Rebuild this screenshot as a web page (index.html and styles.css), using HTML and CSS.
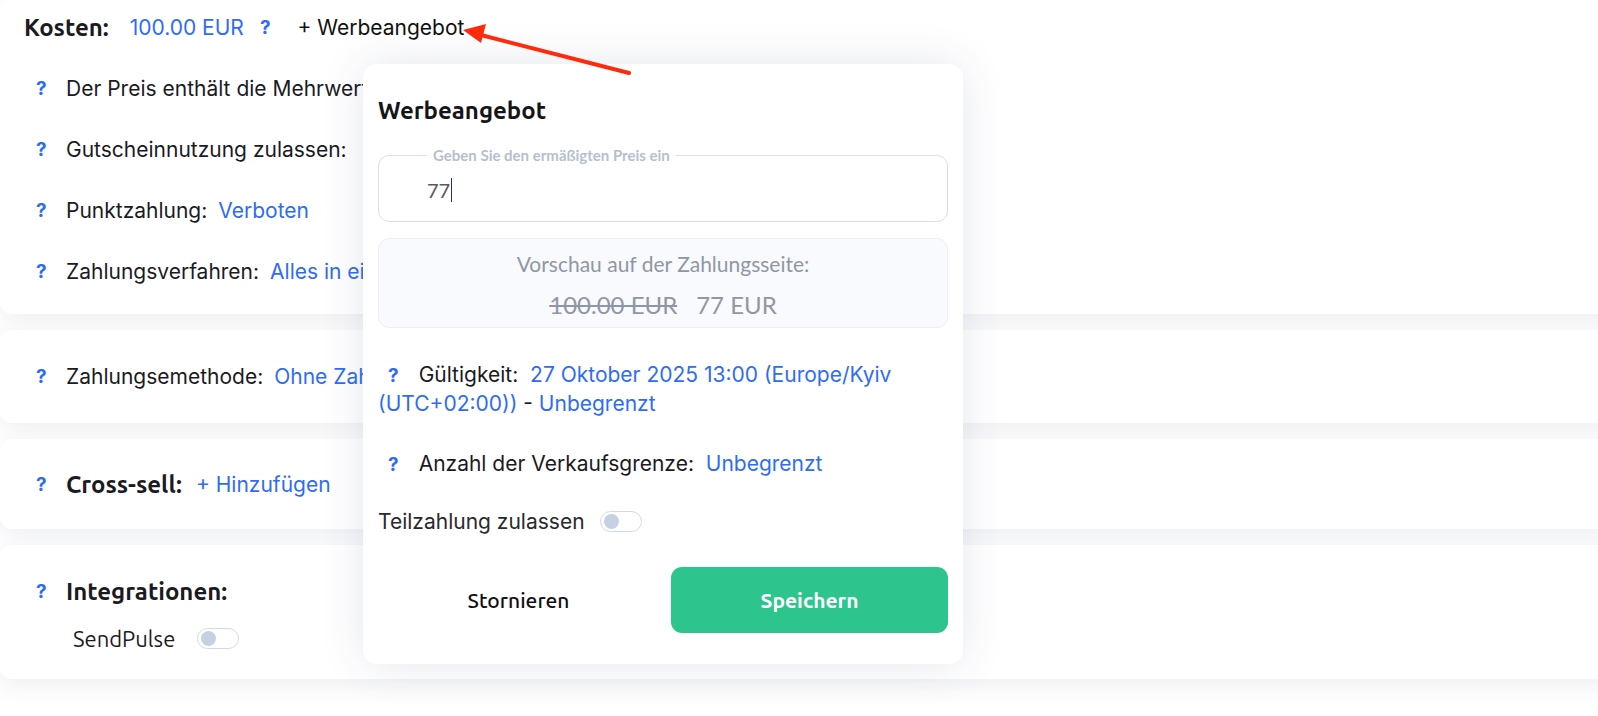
FILE: index.html
```html
<!DOCTYPE html>
<html lang="de">
<head>
<meta charset="utf-8">
<title>Werbeangebot</title>
<link rel="stylesheet" href="styles.css">
</head>
<body>
<div class="page">
  <section class="card card-main">
    <div class="row row-cost">
      <span class="heading">Kosten:</span>
      <span class="link price">100.00 EUR</span>
      <span class="q">?</span>
      <span class="add-offer">+ Werbeangebot</span>
    </div>
    <div class="row"><span class="q">?</span><span class="label">Der Preis enthält die Mehrwertsteuer:</span></div>
    <div class="row"><span class="q">?</span><span class="label">Gutscheinnutzung zulassen:</span></div>
    <div class="row"><span class="q">?</span><span class="label">Punktzahlung:</span><span class="link">Verboten</span></div>
    <div class="row"><span class="q">?</span><span class="label">Zahlungsverfahren:</span><span class="link">Alles in einem</span></div>
  </section>
  <section class="card card-method">
    <div class="row"><span class="q">?</span><span class="label">Zahlungsemethode:</span><span class="link">Ohne Zahlung</span></div>
  </section>
  <section class="card card-cross">
    <div class="row"><span class="q">?</span><span class="heading">Cross-sell:</span><span class="link">+ Hinzufügen</span></div>
  </section>
  <section class="card card-integr">
    <div class="row"><span class="q">?</span><span class="heading">Integrationen:</span></div>
    <div class="row row-sub"><span class="sub-name">SendPulse</span><span class="toggle"><span class="knob"></span></span></div>
  </section>

  <div class="modal">
    <h2 class="modal-title">Werbeangebot</h2>
    <fieldset class="field">
      <legend>Geben Sie den ermäßigten Preis ein</legend>
      <div class="field-value">77<span class="caret"></span></div>
    </fieldset>
    <div class="preview">
      <div class="preview-title">Vorschau auf der Zahlungsseite:</div>
      <div class="preview-price"><s>100.00 EUR</s><span>77 EUR</span></div>
    </div>
    <p class="m-row m-valid"><span class="q">?</span>Gültigkeit:&nbsp; <span class="link">27 Oktober 2025 13:00 (Europe/Kyiv (UTC+02:00))</span>&nbsp;-&nbsp;<span class="link">Unbegrenzt</span></p>
    <p class="m-row m-limit"><span class="q">?</span>Anzahl der Verkaufsgrenze:&nbsp; <span class="link">Unbegrenzt</span></p>
    <div class="m-toggle"><span>Teilzahlung zulassen</span><span class="toggle"><span class="knob"></span></span></div>
    <div class="actions">
      <button class="btn btn-cancel">Stornieren</button>
      <button class="btn btn-save">Speichern</button>
    </div>
  </div>

  <svg class="arrow" width="200" height="70" viewBox="0 0 200 70">
    <line x1="186" y1="58" x2="34" y2="19" stroke="#ff2a0c" stroke-width="4" stroke-linecap="round"/>
    <polygon points="20,15 43,9 38,28" fill="#ff2a0c"/>
  </svg>
</div>
</body>
</html>
```

FILE: styles.css
```css
* { box-sizing: border-box; }
html, body { margin: 0; padding: 0; background: #ffffff; }
body {
  font-family: "Inter", "Liberation Sans", sans-serif;
  color: #1b1b1f;
  font-size: 21px;
  width: 1598px;
  height: 716px;
  overflow: hidden;
}
.page {
  position: relative;
  display: flex;
  flex-direction: column;
  gap: 16px;
  width: 1640px;
}
.card {
  background: #fff;
  border-radius: 12px;
  box-shadow: 0 8px 22px rgba(40, 60, 110, 0.075);
  display: flex;
  flex-direction: column;
}
.card-main { height: 314px; padding-top: 12px; }
.card-method { height: 93px; justify-content: center; }
.card-cross { height: 90px; justify-content: center; }
.card-integr { height: 134px; padding-top: 31px; }

.row {
  display: flex;
  align-items: center;
  height: 61px;
  padding-left: 36px;
  white-space: nowrap;
}
.card-method .row, .card-cross .row { height: 40px; }
.card-integr .row { height: 30px; }
.card-integr .row-sub { margin-top: 17px; padding-left: 73px; }

.row-cost { height: 30px; padding-left: 24px; margin-bottom: 16px; }
.row .q { width: 30px; }
.row-cost .q { width: auto; margin-left: 16px; margin-right: 27px; }
.q {
  color: #2f6cf6;
  font-weight: 700;
  font-size: 19px;
}
.label { margin-right: 11px; }
.link { color: #2f6cf6; }
.heading {
  font-family: "Ubuntu", "Noto Sans", sans-serif;
  font-weight: 700;
  font-size: 24px;
  margin-right: 14px;
}
.row-cost .heading { margin-right: 21px; }
.add-offer { color: #111; }
.sub-name {
  font-family: "Ubuntu", "Noto Sans", sans-serif;
  font-size: 22px;
  margin-right: 22px;
}

.toggle {
  display: inline-flex;
  align-items: center;
  width: 42px;
  height: 21px;
  border: 1px solid #cfd9ea;
  border-radius: 11px;
  padding-left: 3px;
  background: #fff;
}
.knob {
  width: 15px;
  height: 15px;
  border-radius: 50%;
  background: #c5d1e3;
}

.arrow {
  position: absolute;
  left: 443px;
  top: 15px;
}

.modal {
  position: absolute;
  left: 363px;
  top: 64px;
  width: 600px;
  height: 600px;
  background: #fff;
  border-radius: 14px;
  box-shadow: 0 0 44px rgba(40, 60, 110, 0.12);
  padding: 32px 15px 0;
  display: flex;
  flex-direction: column;
}
.modal-title {
  margin: 0 0 21px;
  font-family: "Ubuntu", "Noto Sans", sans-serif;
  font-weight: 700;
  font-size: 24px;
  line-height: 30px;
  color: #151518;
}
.field {
  margin: 0;
  height: 75px;
  border: 1px solid #dcdeea;
  border-radius: 11px;
  padding: 0 0 0 48px;
  min-width: 0;
}
.field legend {
  margin-left: 0;
  padding: 0 6px;
  font-family: "Lato", sans-serif;
  font-weight: 700;
  font-size: 15px;
  color: #b5bfcf;
  line-height: 16px;
}
.field-value {
  font-family: "Lato", sans-serif;
  font-size: 20px;
  color: #555a63;
  line-height: 24px;
  margin-top: 15px;
  display: flex;
  align-items: center;
}
.caret {
  display: inline-block;
  width: 1px;
  height: 24px;
  background: #333;
  margin-left: 1px;
}
.preview {
  margin-top: 16px;
  height: 90px;
  background: #f9fafd;
  border: 1px solid #eceff4;
  border-radius: 11px;
  display: flex;
  flex-direction: column;
  align-items: center;
  padding-top: 12px;
  font-family: "Lato", sans-serif;
  color: #8f97a5;
}
.preview-title { font-size: 21px; line-height: 26px; }
.preview-price { margin-top: 13px; font-size: 24px; line-height: 30px; display: flex; gap: 19px; }
.preview-price s { text-decoration-thickness: 2px; }

.m-row {
  margin: 0;
  font-size: 21px;
  line-height: 28px;
}
.m-row .q { margin: 0 20px 0 10px; }
.m-valid { margin-top: 33px; }
.m-limit { margin-top: 32px; }
.m-toggle {
  margin-top: 30px;
  height: 24px;
  display: flex;
  align-items: center;
  gap: 15px;
  font-size: 21px;
  color: #2a2a2e;
}
.actions {
  margin-top: 34px;
  display: flex;
  gap: 8px;
}
.btn {
  height: 66px;
  border: none;
  border-radius: 11px;
  font-family: "Ubuntu", "Noto Sans", sans-serif;
  font-size: 21px;
  cursor: pointer;
}
.btn-cancel { flex: 1; background: #fff; color: #111; font-weight: 500; padding-right: 10px; }
.btn-save { width: 277px; background: #2ec48d; color: #fff; font-weight: 700; }
```
